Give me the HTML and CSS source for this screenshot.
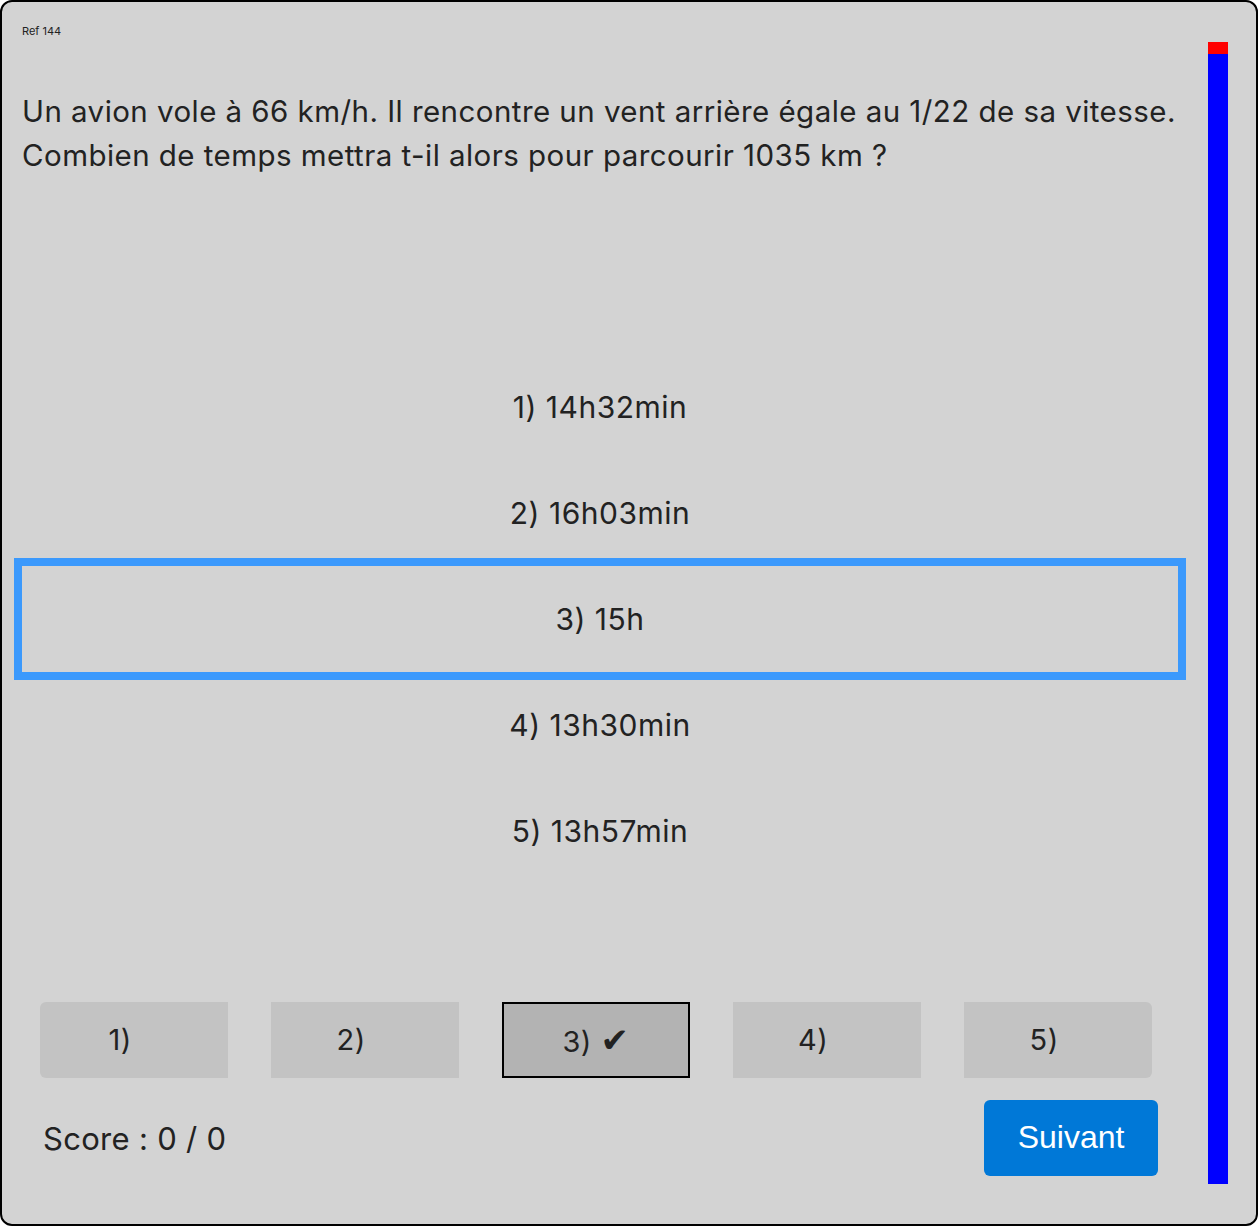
FILE: index.html
```html
<!DOCTYPE html>
<html lang="fr">
<head>
  <meta charset="UTF-8">
  <meta name="viewport" content="width=device-width, initial-scale=1.0">
  <title>Ref 144</title>
  <link rel="stylesheet" href="styles.css">
</head>
<body>
  <div class="frame">
    <div class="main">
      <div class="ref">Ref 144</div>

      <div class="question">
        Un avion vole à 66 km/h. Il rencontre un vent arrière égale au 1/22 de sa vitesse.<br>
        Combien de temps mettra t-il alors pour parcourir 1035 km ?
      </div>

      <div class="options">
        <div class="option">1) 14h32min</div>
        <div class="option">2) 16h03min</div>
        <div class="option selected">3) 15h</div>
        <div class="option">4) 13h30min</div>
        <div class="option">5) 13h57min</div>
      </div>

      <div class="choices">
        <div class="choice first">1) <span class="check">✔</span></div>
        <div class="choice">2) <span class="check">✔</span></div>
        <div class="choice active">3) <span class="check">✔</span></div>
        <div class="choice">4) <span class="check">✔</span></div>
        <div class="choice last">5) <span class="check">✔</span></div>
      </div>

      <div class="footer">
        <div class="score">Score : 0 / 0</div>
        <div class="next">Suivant</div>
      </div>
    </div>

    <!-- time left -->
    <div class="timer">
      <div class="timer-used"></div>
    </div>
  </div>
</body>
</html>
```

FILE: styles.css
```css
body {
  margin: 0;
  font-family: Inter, "Noto Sans", sans-serif;
  color: #222;
}

.frame {
  display: flex;
  height: 100vh;
  box-sizing: border-box;
  border: 2px solid #000;
  border-radius: 12px;
  background-color: #d3d3d3;
}

.main {
  flex: 1;
  display: flex;
  flex-direction: column;
  padding: 22px 30px 0 20px;
}

.ref {
  font-size: 11px;
  line-height: 14px;
}

.question {
  margin-top: 51px;
  font-size: 29.5px;
  line-height: 44px;
  letter-spacing: 0.45px;
}

.options {
  margin-top: 177px;
}

.option {
  height: 106px;
  line-height: 106px;
  text-align: center;
  font-size: 30px;
  letter-spacing: 0.5px;
}

.option.selected {
  outline: 8px solid #3b99fc;
}

.choices {
  display: flex;
  justify-content: space-between;
  margin: 118px 26px 0 18px;
}

.choice {
  width: 188px;
  height: 76px;
  box-sizing: border-box;
  background-color: #c3c3c3;
  font-size: 29px;
  line-height: 76px;
  text-align: center;
  letter-spacing: 0.5px;
}

/* keeps the label in the same place once checked */
.check {
  visibility: hidden;
  font-family: "DejaVu Sans", sans-serif;
  font-size: 22px;
}

.choice.first {
  border-radius: 6px 0 0 6px;
}

.choice.last {
  border-radius: 0 6px 6px 0;
}

.choice.active {
  background-color: #b3b3b3;
  border: 2px solid #000;
  line-height: 73px;
}

.choice.active .check {
  visibility: visible;
  font-size: 34px;
}

.footer {
  display: flex;
  justify-content: space-between;
  align-items: center;
  margin-top: 22px;
  padding: 0 20px 0 21px;
}

.score {
  font-size: 31px;
  letter-spacing: 0.3px;
}

.next {
  width: 174px;
  height: 76px;
  line-height: 74px;
  border-radius: 6px;
  background-color: #0078d7;
  color: white;
  font-family: "Liberation Sans", Arial, sans-serif;
  font-size: 32px;
  text-align: center;
}

.timer {
  width: 20px;
  margin: 40px 28px 40px 0;
  background-color: #0000ff;
}

.timer-used {
  height: 12px;
  background-color: #ff0000;
}
```
